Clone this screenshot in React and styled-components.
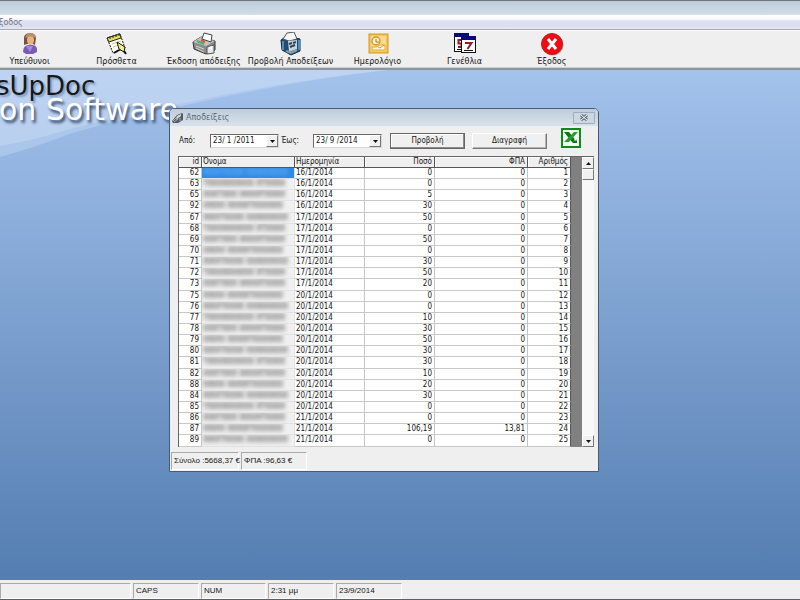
import React from "react";
import styled, { createGlobalStyle, css } from "styled-components";

const Global = createGlobalStyle`
  * { box-sizing: border-box; }
  body { margin: 0; font: 8px/10px "DejaVu Sans Condensed", "Liberation Sans", sans-serif; color: #161616; }
  button, input { font: inherit; color: inherit; }
`;

const Shell = styled.div`
  display: flex;
  flex-direction: column;
  height: 100vh;
  overflow: hidden;
  border-bottom: 1px solid #5c6064;
`;
const Caption = styled.div`
  flex: none;
  height: 15px;
  border-top: 1px solid #6d747d;
  background: linear-gradient(#bccbda, #d3dfe9);
`;
const MenuBar = styled.nav`
  flex: none;
  height: 14px;
  overflow: hidden;
  background: linear-gradient(#fdfeff 0, #fafbfe 4px, #dce1f1 6px, #d9dff0 12px, #e6e9f3 13px);
`;
const MenuLink = styled.a`
  display: block;
  margin-left: -7px;
  font: 8px/15px "DejaVu Sans", sans-serif;
  color: #75757d;
  text-decoration: none;
`;
const ToolBar = styled.div`
  flex: none;
  display: flex;
  height: 41px;
  padding-top: 2px;
  border-top: 1px solid #a5a8ac;
  border-bottom: 2px solid #8c949e;
  background: #efefef;
  box-shadow: inset 0 1px #fcfcfc, inset 0 -1px #cfcfcf;
`;
const ToolItems = styled.div`
  display: flex;
  margin-left: -14px;
`;
const Tool = styled.button`
  display: flex;
  flex-direction: column;
  align-items: center;
  gap: 1px;
  width: 87px;
  padding: 0;
  border: 0;
  background: none;
  font: 8px/10px "DejaVu Sans", sans-serif;
  white-space: nowrap;
  svg { display: block; flex: none; width: 24px; height: 24px; }
`;
const Desktop = styled.main`
  position: relative;
  flex: 1;
  min-height: 0;
  overflow: hidden;
  background: linear-gradient(#a3c2ec, #547db1);
`;
const Swoosh = styled.svg`
  position: absolute;
  inset: 0 auto auto 0;
  width: 400px;
  height: 150px;
`;
const Brand = styled.div`
  position: absolute;
  top: 4px;
  left: -4px;
  font-family: "DejaVu Sans", sans-serif;
  white-space: nowrap;
`;
const BrandName = styled.div`
  font-size: 26px;
  line-height: 25px;
  color: #16181c;
  text-shadow: 2px 2px 2px #5a719699;
`;
const BrandSub = styled.div`
  margin-left: 3px;
  font-size: 30px;
  line-height: 22px;
  color: #fff;
  text-shadow: 2px 3px 3px #34496c;
`;

const Dialog = styled.section`
  position: absolute;
  top: 38px;
  left: 169px;
  width: 430px;
  display: flex;
  flex-direction: column;
  border: 1px solid #4b5a70;
  border-radius: 5px 5px 0 0;
  background: #efefef;
  box-shadow: inset 0 0 0 1px #e9eff6;
`;
const TitleBar = styled.header`
  display: flex;
  align-items: center;
  gap: 2px;
  height: 17px;
  padding: 0 3px 0 2px;
  border-radius: 4px 4px 0 0;
  background: linear-gradient(#becddc, #d8e2eb);
  svg { flex: none; }
`;
const Title = styled.h1`
  flex: 1;
  margin: 0;
  font: 8px/12px "DejaVu Sans", sans-serif;
  color: #5c6977;
`;
const Close = styled.button`
  display: grid;
  place-items: center;
  width: 22px;
  height: 12px;
  padding: 0;
  border: 1px solid #9eacbb;
  border-radius: 1px;
  background: #cbd7e3;
`;
const Filters = styled.form`
  display: flex;
  align-items: center;
  height: 30px;
  padding: 0 17px 0 9px;
`;
const Label = styled.label`
  width: ${(p) => p.$w}px;
`;
const DateBox = styled.div`
  display: flex;
  width: 69px;
  height: 14px;
  margin-right: 2px;
  background: #fff;
  border: 1px solid #d8d8d8;
  border-top-color: #6a6a6a;
  border-left-color: #6a6a6a;
`;
const DateInput = styled.input`
  flex: 1;
  min-width: 0;
  padding: 0 2px;
  border: 0;
  background: none;
  outline: 0;
`;
const raised = css`
  border: 1px solid #fff;
  border-right-color: #777;
  border-bottom-color: #777;
  background: #f0f0f0;
`;
const Arrow = styled.button`
  display: grid;
  place-items: center;
  width: 12px;
  padding: 0;
  ${raised}
`;
const Spacer = styled.div`
  flex: 1;
`;
const Action = styled.button`
  width: 75px;
  height: 16px;
  padding: 0;
  margin-right: ${(p) => p.$gap}px;
  ${raised}
  box-shadow: inset -1px -1px #b5b5b5;
  ${(p) => p.$default && css`border-color: #666; box-shadow: inset -1px -1px #8a8a8a, inset 1px 1px #fff;`}
`;
const IconButton = styled.button`
  align-self: flex-start;
  padding: 2px 0 0;
  border: 0;
  background: none;
  svg { display: block; }
`;
const Grid = styled.div`
  display: flex;
  height: 291px;
  margin: 0 4px 1px 8px;
  border-top: 1px solid #666;
  border-left: 1px solid #666;
  background: #fff;
`;
const TableView = styled.div`
  flex: 1;
  overflow: hidden;
`;
const Table = styled.table`
  width: 100%;
  height: 301px;
  table-layout: fixed;
  border-collapse: separate;
  border-spacing: 0;
`;
const Th = styled.th`
  width: ${(p) => p.$w}px;
  padding: 0 2px 0 1px;
  font-weight: 400;
  line-height: 10px;
  text-align: ${(p) => (p.$right ? "right" : "left")};
  background: #efefef;
  border-right: 1px solid #555;
  border-bottom: 1px solid #555;
  box-shadow: inset 1px 1px #fff;
`;
const Td = styled.td`
  height: 11px;
  padding: 0 2px 0 1px;
  overflow: hidden;
  line-height: 10px;
  white-space: nowrap;
  text-align: ${(p) => (p.$right ? "right" : "left")};
  border-right: 1px solid #c4c4c4;
  border-bottom: 1px solid #c8c8c8;
  &:last-child { border-right-color: #555; }
  ${(p) => p.$name && css`background: ${p.$selected ? "#2b8ae6" : "#f0f0f0"}; border-color: #e2e2e2;`}
`;
const Masked = styled.span`
  display: block;
  color: ${(p) => (p.$selected ? "#8cc0f4" : "#222")};
  filter: blur(2px);
`;
const Filler = styled.div`
  width: 11px;
  background: #808080;
`;
const ScrollBar = styled.div`
  display: flex;
  flex-direction: column;
  width: 12px;
  background: #f8f8f8;
`;
const ScrollButton = styled(Arrow)`
  flex: none;
  height: 12px;
`;
const Thumb = styled.div`
  height: 11px;
  ${raised}
`;
const Track = styled.div`
  flex: 1;
`;
const StatusBar = styled.footer`
  flex: none;
  display: flex;
  gap: 2px;
  height: ${(p) => p.$h}px;
  padding: ${(p) => p.$pad};
  background: #efefef;
`;
const Panel = styled.div`
  display: flex;
  align-items: center;
  width: ${(p) => p.$w}px;
  padding: 0 2px;
  font-family: "Liberation Sans", Arial, sans-serif;
  white-space: nowrap;
  border: 1px solid #fff;
  border-top-color: #aaa;
  border-left-color: #aaa;
`;

const UserIcon = () => (
  <svg viewBox="0 0 24 24">
    <path d="M5 20q0-6 5-7h5q5 1 4 7l-4 2H8z" fill="#7a5cb4" />
    <path d="M8 14l4 6 3-6z" fill="#a58ad6" />
    <path d="M6 13V5q1-4 7-4 5 1 5 5l-1 7-2-1H9z" fill="#765040" />
    <ellipse cx="12.5" cy="8" rx="3.5" ry="5" fill="#e8b47c" />
    <path d="M7 6q1-5 6-5 4 0 5 5-5-3-11 0" fill="#b8916a" />
  </svg>
);
const NotesIcon = () => (
  <svg viewBox="0 0 24 24">
    <path d="M2 6l13-4 5 14-12 5z" fill="#fdfdf0" stroke="#111" strokeDasharray="2 1" />
    <path d="M2 6l13-4 1 4-12 4z" fill="#dfe04c" stroke="#222" />
    <path d="M5 4v3M8 3v3M11 2v3M14 1v3" stroke="#333" />
    <path d="M7 12l9-3M8 15l6-2" stroke="#c9c9a0" />
    <path d="M12 10l8 5-1 5-5-3z" fill="#f2ee8a" stroke="#111" />
    <path d="M9 21l5-3M19 19l2 3" stroke="#111" strokeWidth="2" />
  </svg>
);
const PrinterIcon = () => (
  <svg viewBox="0 0 24 24">
    <path d="M1 10l8-5 14 4v9l-9 4-12-5z" fill="#8b8b8b" stroke="#333" />
    <path d="M1 10l8-5 14 4-9 5z" fill="#c4c4c4" />
    <path d="M10 7l2-6 8 2-1 7z" fill="#fff" stroke="#444" />
    <path d="M5 9l7 3" stroke="#3fb568" strokeWidth="2" />
    <path d="M9 8l4 2" stroke="#df4d3f" strokeWidth="2" />
    <path d="M4 14l8 3M4 16l8 4" stroke="#d8d8d8" />
    <path d="M15 15l7-2v8l-7 1z" fill="#e5e7ef" stroke="#555" />
    <path d="M17 15l3-1v3l-3 1z" fill="#fff" />
  </svg>
);
const ReceiptsIcon = () => (
  <svg viewBox="0 0 24 24">
    <path d="M2 8l6-4 13 3v12l-9 4-9-5z" fill="#254c70" stroke="#172b3f" />
    <path d="M4 7l4-6 7-1 3 7-8 2z" fill="#f4f6f6" stroke="#555" />
    <path d="M9 9l9-1v9l-8 3z" fill="#c7d6da" />
    <path d="M10 12l3-1M14 11l3-1M11 15l5-2" stroke="#304656" strokeWidth="2" />
    <path d="M4 9v9M20 8v10" stroke="#4a8ec2" strokeWidth="2" />
    <path d="M7 19l5 2 6-3" stroke="#8aa2ae" strokeWidth="2" fill="none" />
  </svg>
);
const CalendarIcon = () => (
  <svg viewBox="0 0 24 24">
    <rect x="3" y="2" width="19" height="19" fill="#f1bd45" stroke="#d79a25" />
    <rect x="5" y="4" width="15" height="15" fill="#f8dc93" stroke="#f7d67b" />
    <circle cx="10" cy="9" r="4" fill="#fff3cf" stroke="#d89a20" strokeWidth="1.5" />
    <path d="M10 7v3h3" stroke="#aa7925" fill="none" />
    <path d="M6 15h5l2-2h6v5H6z" fill="#fff8df" stroke="#e2a52b" />
    <path d="M12 15l2 1 4-3" stroke="#d89a20" fill="none" />
  </svg>
);
const BirthdayIcon = () => (
  <svg viewBox="0 0 24 24">
    <rect x="1.5" y="1.5" width="14" height="18" fill="#fff" stroke="#111" />
    <path d="M1 1h15v4H1z" fill="#08087a" />
    <path d="M9 8H5.500v3.500h3V15H5" fill="none" stroke="#981824" strokeWidth="2" />
    <path d="M4 17.500h4" stroke="#111" />
    <rect x="8.500" y="4.500" width="14" height="16" fill="#fff" stroke="#111" />
    <path d="M8 4h15v4H8z" fill="#08087a" />
    <path d="M12 11h6.500l-4 6" fill="none" stroke="#981824" strokeWidth="2" />
    <path d="M11 18.500h9" stroke="#111" />
  </svg>
);
const ExitIcon = () => (
  <svg viewBox="0 0 24 24">
    <circle cx="13" cy="13" r="10.5" fill="#777" opacity=".6" />
    <circle cx="12" cy="12" r="10.5" fill="#f00b12" stroke="#c0181c" />
    <path d="M8 7l8 10M16 7l-8 10" stroke="#fff" strokeWidth="3" />
  </svg>
);
const ReceiptGlyph = () => (
  <svg width="12" height="12" viewBox="0 0 12 12">
    <path d="M0 9l5-6 5-2 1 1v6l-5 3H1z" fill="#555b62" />
    <path d="M5 4l4-2v2L4 8z" fill="#d4d6d8" />
    <path d="M1 9l4-4M2 10l4-3M8 6v3" stroke="#a9aeb2" />
  </svg>
);
const ExcelIcon = () => (
  <svg width="20" height="20" viewBox="0 0 20 20">
    <rect x="1" y="1" width="18" height="18" fill="#f4fff4" stroke="#0d8a18" strokeWidth="2" />
    <path d="M3 4h5l8 10h-5z" fill="#11731b" />
    <path d="M13 4h4L8 14H3z" fill="#2d9a37" />
    <path d="M11 14l5-3v4h-4z" fill="#11731b" />
    <path d="M13 12h3" stroke="#fff" />
  </svg>
);
const Triangle = ({ up }) => (
  <svg width="5" height="3" viewBox="0 0 5 3">
    <path d={up ? "M0 3h5L2.5 0z" : "M0 0h5L2.5 3z"} fill="#111" />
  </svg>
);

const tools = [
  ["Υπεύθυνοι", UserIcon],
  ["Πρόσθετα", NotesIcon],
  ["Έκδοση απόδειξης", PrinterIcon],
  ["Προβολή Αποδείξεων", ReceiptsIcon],
  ["Ημερολόγιο", CalendarIcon],
  ["Γενέθλια", BirthdayIcon],
  ["Έξοδος", ExitIcon],
];

const rows = [
  [62, "16/1/2014", "0"], [63, "16/1/2014", "0"], [65, "16/1/2014", "5"], [92, "16/1/2014", "30"],
  [67, "17/1/2014", "50"], [68, "17/1/2014", "0"], [69, "17/1/2014", "50"], [70, "17/1/2014", "0"],
  [71, "17/1/2014", "30"], [72, "17/1/2014", "50"], [73, "17/1/2014", "20"], [75, "20/1/2014", "0"],
  [76, "20/1/2014", "0"], [77, "20/1/2014", "10"], [78, "20/1/2014", "30"], [79, "20/1/2014", "50"],
  [80, "20/1/2014", "30"], [81, "20/1/2014", "30"], [82, "20/1/2014", "10"], [88, "20/1/2014", "20"],
  [84, "20/1/2014", "30"], [85, "20/1/2014", "0"], [86, "21/1/2014", "0"], [87, "21/1/2014", "106,19", "13,81"],
  [89, "21/1/2014", "0"],
];
const masks = ["ΧΙΧΧΤΧΧΧΧ ΧΧΧΙΧΧΧΧΧ", "ΤΧΧΧΧΙΧΧΧΧΧ ΧΤΧΧΧΧ", "ΧΧΧΤΧΧΧ ΙΧΧΧΧΤΧΧΧΧ", "ΧΧΙΧΧ ΧΧΧΙΧΤΧΧΧΧΧΧ"];

export default function App() {
  return (
    <Shell>
      <Global />
      <Caption />
      <MenuBar><MenuLink href="#exit">Έξοδος</MenuLink></MenuBar>
      <ToolBar>
        <ToolItems>
          {tools.map(([name, Icon]) => <Tool key={name} type="button"><Icon />{name}</Tool>)}
        </ToolItems>
      </ToolBar>
      <Desktop>
        <Swoosh viewBox="0 0 400 150" aria-hidden="true">
          <path d="M0 0H388Q300 10 200 32T67 65Q36 77 0 87z" fill="#c9dbf4" opacity=".4" />
          <path d="M0 0H388Q290 10 180 34T60 62Q30 71 0 76z" fill="#cfdff5" opacity=".4" />
        </Swoosh>
        <Brand>
          <BrandName>sUpDoc</BrandName>
          <BrandSub>on Software</BrandSub>
        </Brand>
        <Dialog aria-label="Αποδείξεις">
          <TitleBar>
            <ReceiptGlyph />
            <Title>Αποδείξεις</Title>
            <Close type="button" aria-label="Κλείσιμο">
              <svg width="8" height="7" viewBox="0 0 8 7">
                <path d="M1 1l6 5M7 1L1 6" stroke="#66717d" strokeWidth="3" />
                <path d="M1 1l6 5M7 1L1 6" stroke="#f2f5f8" />
              </svg>
            </Close>
          </TitleBar>
          <Filters onSubmit={(e) => e.preventDefault()}>
            <Label htmlFor="from" $w={31}>Από:</Label>
            <DateBox>
              <DateInput id="from" defaultValue="23/ 1 /2011" />
              <Arrow type="button" aria-label="Ημερολόγιο από"><Triangle /></Arrow>
            </DateBox>
            <Label htmlFor="to" $w={32}>Έως:</Label>
            <DateBox>
              <DateInput id="to" defaultValue="23/ 9 /2014" />
              <Arrow type="button" aria-label="Ημερολόγιο έως"><Triangle /></Arrow>
            </DateBox>
            <Spacer />
            <Action type="submit" $default $gap={7}>Προβολή</Action>
            <Action type="button" $gap={14}>Διαγραφή</Action>
            <IconButton type="button" aria-label="Excel"><ExcelIcon /></IconButton>
          </Filters>
          <Grid>
            <TableView>
              <Table>
                <thead>
                  <tr>
                    <Th $w={23} $right>id</Th>
                    <Th $w={93}>Όνομα</Th>
                    <Th $w={70}>Ημερομηνία</Th>
                    <Th $w={70} $right>Ποσό</Th>
                    <Th $w={93} $right>ΦΠΑ</Th>
                    <Th $right>Αριθμός</Th>
                  </tr>
                </thead>
                <tbody>
                  {rows.map(([id, date, amount, vat = "0"], i) => (
                    <tr key={id}>
                      <Td $right>{id}</Td>
                      <Td $name $selected={i === 0}>
                        <Masked $selected={i === 0} aria-hidden="true">{masks[i % 4]}</Masked>
                      </Td>
                      <Td>{date}</Td>
                      <Td $right>{amount}</Td>
                      <Td $right>{vat}</Td>
                      <Td $right>{i + 1}</Td>
                    </tr>
                  ))}
                  <tr>{[0, 1, 2, 3, 4, 5].map((n) => <Td key={n} />)}</tr>
                </tbody>
              </Table>
            </TableView>
            <Filler />
            <ScrollBar>
              <ScrollButton type="button" aria-label="Πάνω"><Triangle up /></ScrollButton>
              <Thumb />
              <Track />
              <ScrollButton type="button" aria-label="Κάτω"><Triangle /></ScrollButton>
            </ScrollBar>
          </Grid>
          <StatusBar $h={23} $pad="4px 1px 1px">
            <Panel $w={68}>Σύνολο :5668,37 €</Panel>
            <Panel $w={66}>ΦΠΑ :96,63 €</Panel>
          </StatusBar>
        </Dialog>
      </Desktop>
      <StatusBar $h={19} $pad="3px 0 0">
        <Panel $w={131} />
        <Panel $w={66}>CAPS</Panel>
        <Panel $w={65}>NUM</Panel>
        <Panel $w={66}>2:31 μμ</Panel>
        <Panel $w={66}>23/9/2014</Panel>
      </StatusBar>
    </Shell>
  );
}
